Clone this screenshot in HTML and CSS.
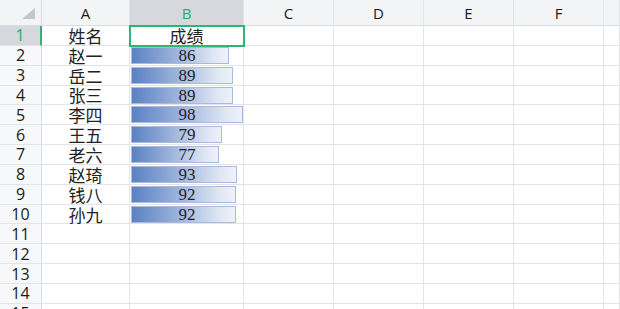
FILE: index.html
```html
<!DOCTYPE html>
<html lang="zh">
<head>
<meta charset="utf-8">
<link rel="stylesheet" href="styles.css">
</head>
<body>
<div class="sheet">
  <div class="corner"><span class="tri"></span></div>
  <div class="colhead">A</div>
  <div class="colhead sel">B</div>
  <div class="colhead">C</div>
  <div class="colhead">D</div>
  <div class="colhead">E</div>
  <div class="colhead">F</div>
  <div class="colhead last"></div>

  <div class="rowhead sel">1</div>
  <div class="cell name">姓名</div>
  <div class="cell name active">成绩</div>
  <div class="cell"></div><div class="cell"></div><div class="cell"></div><div class="cell"></div><div class="cell last"></div>

  <div class="rowhead">2</div>
  <div class="cell name">赵一</div>
  <div class="cell bar-cell"><span class="bar" style="width:98px"></span><span class="num">86</span></div>
  <div class="cell"></div><div class="cell"></div><div class="cell"></div><div class="cell"></div><div class="cell last"></div>

  <div class="rowhead">3</div>
  <div class="cell name">岳二</div>
  <div class="cell bar-cell"><span class="bar" style="width:102px"></span><span class="num">89</span></div>
  <div class="cell"></div><div class="cell"></div><div class="cell"></div><div class="cell"></div><div class="cell last"></div>

  <div class="rowhead">4</div>
  <div class="cell name">张三</div>
  <div class="cell bar-cell"><span class="bar" style="width:102px"></span><span class="num">89</span></div>
  <div class="cell"></div><div class="cell"></div><div class="cell"></div><div class="cell"></div><div class="cell last"></div>

  <div class="rowhead">5</div>
  <div class="cell name">李四</div>
  <div class="cell bar-cell"><span class="bar" style="width:112px"></span><span class="num">98</span></div>
  <div class="cell"></div><div class="cell"></div><div class="cell"></div><div class="cell"></div><div class="cell last"></div>

  <div class="rowhead">6</div>
  <div class="cell name">王五</div>
  <div class="cell bar-cell"><span class="bar" style="width:91px"></span><span class="num">79</span></div>
  <div class="cell"></div><div class="cell"></div><div class="cell"></div><div class="cell"></div><div class="cell last"></div>

  <div class="rowhead">7</div>
  <div class="cell name">老六</div>
  <div class="cell bar-cell"><span class="bar" style="width:88px"></span><span class="num">77</span></div>
  <div class="cell"></div><div class="cell"></div><div class="cell"></div><div class="cell"></div><div class="cell last"></div>

  <div class="rowhead">8</div>
  <div class="cell name">赵琦</div>
  <div class="cell bar-cell"><span class="bar" style="width:106px"></span><span class="num">93</span></div>
  <div class="cell"></div><div class="cell"></div><div class="cell"></div><div class="cell"></div><div class="cell last"></div>

  <div class="rowhead">9</div>
  <div class="cell name">钱八</div>
  <div class="cell bar-cell"><span class="bar" style="width:105px"></span><span class="num">92</span></div>
  <div class="cell"></div><div class="cell"></div><div class="cell"></div><div class="cell"></div><div class="cell last"></div>

  <div class="rowhead">10</div>
  <div class="cell name">孙九</div>
  <div class="cell bar-cell"><span class="bar" style="width:105px"></span><span class="num">92</span></div>
  <div class="cell"></div><div class="cell"></div><div class="cell"></div><div class="cell"></div><div class="cell last"></div>

  <div class="rowhead">11</div>
  <div class="cell"></div><div class="cell"></div><div class="cell"></div><div class="cell"></div><div class="cell"></div><div class="cell"></div><div class="cell last"></div>
  <div class="rowhead">12</div>
  <div class="cell"></div><div class="cell"></div><div class="cell"></div><div class="cell"></div><div class="cell"></div><div class="cell"></div><div class="cell last"></div>
  <div class="rowhead">13</div>
  <div class="cell"></div><div class="cell"></div><div class="cell"></div><div class="cell"></div><div class="cell"></div><div class="cell"></div><div class="cell last"></div>
  <div class="rowhead">14</div>
  <div class="cell"></div><div class="cell"></div><div class="cell"></div><div class="cell"></div><div class="cell"></div><div class="cell"></div><div class="cell last"></div>
  <div class="rowhead">15</div>
  <div class="cell"></div><div class="cell"></div><div class="cell"></div><div class="cell"></div><div class="cell"></div><div class="cell"></div><div class="cell last"></div>
</div>
</body>
</html>
```

FILE: styles.css
```css
html, body {
  margin: 0;
  padding: 0;
  background: #ffffff;
  overflow: hidden;
}
.sheet {
  display: grid;
  grid-template-columns: 42px 88px 114px 90px 90px 90px 90px 16px;
  grid-template-rows: 26px repeat(15, 19.85px);
  width: 620px;
  height: 309px;
  overflow: hidden;
  font-family: "Noto Sans CJK SC", sans-serif;
  color: #222222;
}
.sheet > div {
  box-sizing: border-box;
  border-right: 1px solid #e2e4ea;
  border-bottom: 1px solid #e2e4ea;
  min-width: 0;
  min-height: 0;
}
.corner {
  background: #f3f4f6;
  position: relative;
  border-right-color: #d9dce2 !important;
  border-bottom-color: #d9dce2 !important;
}
.tri {
  position: absolute;
  right: 6px;
  bottom: 6px;
  width: 0;
  height: 0;
  border-left: 13px solid transparent;
  border-bottom: 11px solid #c4c6ca;
}
.colhead {
  background: #f3f4f6;
  display: flex;
  align-items: center;
  justify-content: center;
  font-family: "Open Sans", "Noto Sans", sans-serif;
  font-size: 15px;
  color: #1a1a1a;
  border-bottom-color: #d9dce2 !important;
  padding-top: 1px;
}
.colhead.sel {
  background: #d6d8dd;
  color: #1fae6a;
}
.rowhead {
  background: #f7f8fa;
  display: flex;
  align-items: center;
  justify-content: center;
  font-family: "Open Sans", "Noto Sans", sans-serif;
  font-size: 16px;
  color: #1a1a1a;
  border-right-color: #d9dce2 !important;
  line-height: 1;
}
.rowhead.sel {
  background: #d6d8dd;
  color: #1fae6a;
  border-right: 2px solid #2bb673 !important;
}
.cell {
  background: #ffffff;
}
.name {
  display: flex;
  align-items: center;
  justify-content: center;
  font-size: 17px;
  line-height: 1;
  color: #222222;
}
.active {
  outline: 2px solid #2bb673;
  outline-offset: -1px;
  position: relative;
  z-index: 2;
}
.bar-cell {
  display: grid;
  grid-template-columns: 1fr;
  grid-template-rows: 1fr;
  padding: 1px 0 1px 1px;
}
.bar {
  grid-area: 1 / 1;
  box-sizing: border-box;
  height: 17px;
  align-self: start;
  border: 1px solid #a8bbdd;
  background: linear-gradient(to right, #5b81c3 0%, #9db3db 45%, #dfe7f4 85%, #eef2f9 100%);
}
.num {
  grid-area: 1 / 1;
  z-index: 1;
  display: flex;
  align-items: center;
  justify-content: center;
  font-family: "Liberation Serif", "DejaVu Serif", serif;
  font-size: 17px;
  color: #222222;
  line-height: 1;
}
```
